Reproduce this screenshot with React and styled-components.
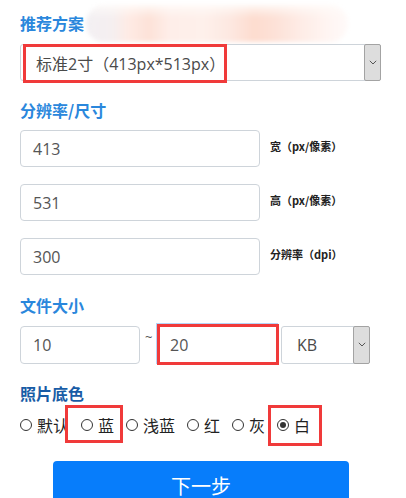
import React from "react";
import styled, { createGlobalStyle } from "styled-components";

const Global = createGlobalStyle`
  html, body { margin: 0; padding: 0; background: #fff; }
  body { font-family: "Noto Sans CJK SC", "Noto Sans", sans-serif; }
  * { box-sizing: border-box; }
`;

const Page = styled.div`
  width: 381px;
  padding: 0 0 0 20px;
`;

const Heading = styled.div`
  position: relative;
  margin-top: ${(p) => p.$mt}px;
  padding-top: ${(p) => p.$pt || 0}px;
  font-size: 16px;
  line-height: 24px;
  font-weight: 700;
  color: ${(p) => (p.$dark ? "#185ca6" : "#2a87dc")};
`;

const Censor = styled.div`
  position: absolute;
  left: 66px;
  top: 5px;
  width: 262px;
  height: 37px;
  border-radius: 18px;
  filter: blur(2px);
  background:
    linear-gradient(180deg, rgba(255, 252, 250, 0.8) 0%, rgba(255, 252, 250, 0) 35%),
    linear-gradient(
      90deg,
      #f3f0f3 0%,
      #f5eff0 10%,
      #feebe5 16%,
      #fde2d8 24%,
      #feeee9 32%,
      #fef0eb 45%,
      #fde8e1 55%,
      #fddccf 64%,
      #fde1d7 72%,
      #feece6 82%,
      #fff5f2 92%,
      #fffaf9 100%
    );
`;

const SelectBox = styled.div`
  position: relative;
  display: flex;
  align-items: stretch;
  margin-top: ${(p) => p.$mt || 0}px;
  width: ${(p) => p.$w}px;
  height: ${(p) => p.$h}px;
  border: 1px solid #ced4da;
  border-radius: 3px;
  background: #fff;
`;

const SelectText = styled.div`
  flex: 1;
  display: flex;
  align-items: center;
  padding-left: ${(p) => p.$pl}px;
  font-size: 16px;
  color: #4a4a4a;
  font-family: "Open Sans", "Noto Sans CJK SC", sans-serif;
  white-space: nowrap;
`;

const ArrowBtn = styled.div`
  width: 17px;
  margin: -1px -1px -1px 0;
  display: flex;
  align-items: center;
  justify-content: center;
  background: #dddddd;
  border: 1px solid #a3a3a3;
  border-radius: 2px;
`;

const RedFrame = styled.div`
  position: absolute;
  left: 2px;
  top: -1px;
  width: 204px;
  height: 39px;
  border: 3px solid #f03a3a;
  pointer-events: none;
`;

const Fields = styled.div`
  display: flex;
  flex-direction: column;
  gap: 17px;
  margin-top: 8px;
`;

const FieldRow = styled.div`
  display: flex;
  align-items: flex-start;
  gap: 10px;
`;

const Input = styled.div`
  width: ${(p) => p.$w}px;
  height: ${(p) => p.$h || 37}px;
  display: flex;
  align-items: center;
  padding-left: ${(p) => (p.$hl ? 10 : 12)}px;
  border: ${(p) => (p.$hl ? "3px solid #f03a3a" : "1px solid #ced4da")};
  border-radius: ${(p) => (p.$hl ? 0 : 4)}px;
  box-shadow: ${(p) => (p.$hl ? "-1px -1px 0 0 #b5d4f8" : "none")};
  font-family: "Open Sans", "Noto Sans", sans-serif;
  font-size: 16px;
  color: #555;
  background: #fff;
`;

const FieldLabel = styled.div`
  padding-top: 8px;
  font-size: 11px;
  line-height: 16px;
  font-weight: 700;
  color: #222;
  white-space: nowrap;
`;

const SizeRow = styled.div`
  display: flex;
  align-items: center;
  margin-top: 7px;
  height: 41px;
`;

const Tilde = styled.div`
  width: 17px;
  align-self: flex-start;
  padding-top: 4px;
  padding-left: 5px;
  font-size: 13px;
  color: #555;
  font-family: "Open Sans", sans-serif;
`;

const Gap = styled.div`
  width: ${(p) => p.$w}px;
`;

const RadioRow = styled.div`
  display: flex;
  align-items: center;
  margin-top: 10px;
  height: 20px;
`;

const RadioItem = styled.label`
  position: relative;
  display: flex;
  align-items: center;
  gap: 5px;
  margin-right: 12px;
  font-size: 16px;
  line-height: 20px;
  color: #222;
  z-index: ${(p) => (p.$box ? 1 : "auto")};
  &::before {
    content: "";
    display: ${(p) => (p.$box ? "block" : "none")};
    position: absolute;
    z-index: -1;
    left: ${(p) => (p.$box ? p.$box[0] : 0)}px;
    right: ${(p) => (p.$box ? p.$box[1] : 0)}px;
    top: -10px;
    bottom: ${(p) => (p.$box ? p.$box[2] : 0)}px;
    border: 3px solid #f03a3a;
    background: #fff;
  }
`;

const Circle = styled.span`
  width: 12px;
  height: 12px;
  border-radius: 50%;
  border: 1px solid #333;
  display: flex;
  align-items: center;
  justify-content: center;
  background: #fff;
  &::after {
    content: "";
    display: ${(p) => (p.$on ? "block" : "none")};
    width: 6px;
    height: 6px;
    border-radius: 50%;
    background: #333;
  }
`;

const NextBtn = styled.div`
  margin: 26px 0 0 33px;
  width: 296px;
  height: 50px;
  line-height: 50px;
  text-align: center;
  background: #077dfb;
  border-radius: 4px;
  color: #fff;
  font-size: 20px;
`;

const Chevron = () => (
  <svg width="8" height="5" viewBox="0 0 8 5">
    <path d="M0.8 0.8 L4 4 L7.2 0.8" fill="none" stroke="#555" strokeWidth="1" />
  </svg>
);

const colors = [
  { t: "默认" },
  { t: "蓝", box: [-16, -9, -8] },
  { t: "浅蓝" },
  { t: "红" },
  { t: "灰" },
  { t: "白", on: true, box: [-9, -12, -11] },
];

export default function App() {
  return (
    <Page>
      <Global />
      <Heading $pt={11} $mt={0}>
        推荐方案
        <Censor />
      </Heading>
      <SelectBox $mt={9} $w={361} $h={37}>
        <SelectText $pl={15}>标准2寸（413px*513px）</SelectText>
        <ArrowBtn>
          <Chevron />
        </ArrowBtn>
        <RedFrame />
      </SelectBox>

      <Heading $mt={17}>分辨率/尺寸</Heading>
      <Fields>
        <FieldRow>
          <Input $w={240}>413</Input>
          <FieldLabel>宽（px/像素）</FieldLabel>
        </FieldRow>
        <FieldRow>
          <Input $w={240}>531</Input>
          <FieldLabel>高（px/像素）</FieldLabel>
        </FieldRow>
        <FieldRow>
          <Input $w={240}>300</Input>
          <FieldLabel>分辨率（dpi）</FieldLabel>
        </FieldRow>
      </Fields>

      <Heading $mt={18}>文件大小</Heading>
      <SizeRow>
        <Input $w={120} $h={38}>10</Input>
        <Tilde>~</Tilde>
        <Input $w={122} $h={41} $hl>20</Input>
        <Gap $w={2} />
        <SelectBox $w={89} $h={38}>
          <SelectText $pl={15}>KB</SelectText>
          <ArrowBtn>
            <Chevron />
          </ArrowBtn>
        </SelectBox>
      </SizeRow>

      <Heading $mt={16} $dark>
        照片底色
      </Heading>
      <RadioRow>
        {colors.map((c) => (
          <RadioItem key={c.t} $box={c.box}>
            <Circle $on={c.on} />
            {c.t}
          </RadioItem>
        ))}
      </RadioRow>

      <NextBtn>下一步</NextBtn>
    </Page>
  );
}
